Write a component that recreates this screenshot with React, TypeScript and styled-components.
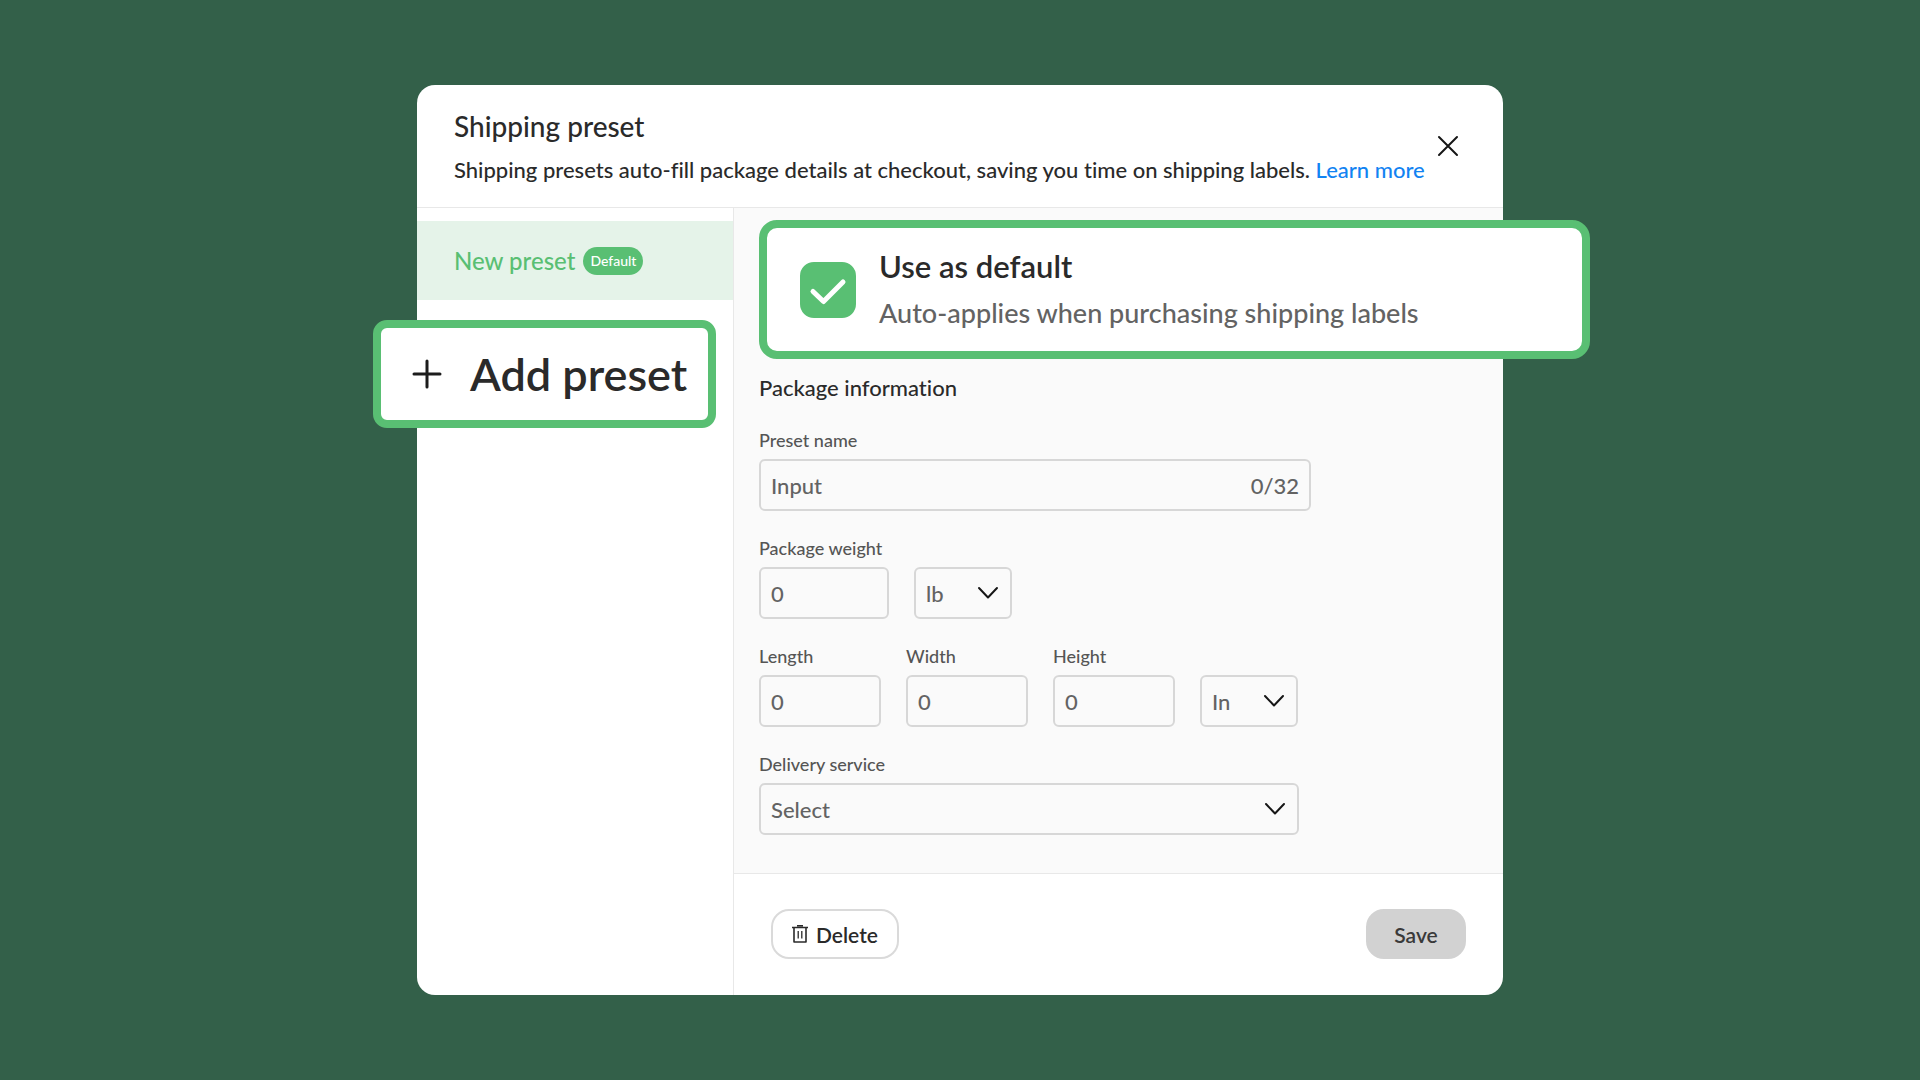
import React, { useState } from "react";
import styled, { createGlobalStyle } from "styled-components";

const green = "#59bf73";
const ink = "#2a2a2a";
const muted = "#636363";
const line = "#e8e8e8";
const outline = "#d7d7d7";

const GlobalStyle = createGlobalStyle`
  *, *::before, *::after { box-sizing: border-box; }
  body {
    margin: 0;
    background: #336049;
    color: ${ink};
    font-family: Lato, "Open Sans", sans-serif;
    font-weight: 500;
    font-variant-ligatures: none;
  }
  input, select, button { font: inherit; color: inherit; margin: 0; }
  h1, h2, p { margin: 0; font-weight: inherit; }
`;

const Page = styled.main`
  min-height: 100vh;
  display: flex;
  align-items: center;
  justify-content: center;
  padding: 40px 88px;
`;

const Dialog = styled.section`
  width: 100%;
  max-width: 1086px;
  background: #fff;
  border-radius: 18px;
`;

const Header = styled.header`
  display: flex;
  align-items: center;
  justify-content: space-between;
  padding: 23px 37px;
  border-bottom: 1px solid ${line};
`;

const Heading = styled.div`
  display: grid;
  gap: 12px;
`;

const Title = styled.h1`
  font-size: 28px;
  line-height: 36px;
`;

const Lead = styled.p`
  font-size: 22px;
  line-height: 28px;
`;

const Link = styled.a`
  color: #1283f2;
  text-decoration: none;
`;

const IconButton = styled.button`
  display: grid;
  place-items: center;
  flex: none;
  width: 36px;
  height: 36px;
  padding: 0;
  border: 0;
  background: none;
  cursor: pointer;
`;

const Body = styled.div`
  display: flex;
`;

const Sidebar = styled.nav`
  flex: 0 0 317px;
  display: flex;
  flex-direction: column;
  align-items: flex-start;
  gap: 20px;
  padding-top: 13px;
  border-right: 1px solid ${line};
`;

const PresetItem = styled.button`
  display: flex;
  align-items: center;
  gap: 8px;
  width: 100%;
  height: 79px;
  padding: 0 37px;
  border: 0;
  background: #e5f3e9;
  color: ${green};
  font-size: 24px;
  text-align: left;
  cursor: pointer;
`;

const Badge = styled.span`
  padding: 0 7px;
  border-radius: 14px;
  background: ${green};
  color: #fff;
  font-size: 14px;
  line-height: 28px;
`;

const AddPreset = styled.button`
  display: flex;
  align-items: center;
  gap: 28px;
  width: 343px;
  height: 108px;
  margin-left: -44px;
  padding: 0 0 0 31px;
  border: 8px solid ${green};
  border-radius: 14px;
  background: #fff;
  font-size: 45px;
  font-weight: 600;
  white-space: nowrap;
  cursor: pointer;
`;

const Main = styled.div`
  flex: 1;
  min-width: 0;
`;

const Form = styled.form`
  padding: 12px 25px 38px;
  background: #fafafa;
`;

const DefaultCard = styled.label`
  display: flex;
  align-items: center;
  gap: 23px;
  height: 139px;
  margin-right: -112px;
  padding: 0 33px;
  border: 8px solid ${green};
  border-radius: 18px;
  background: #fff;
`;

const CheckStack = styled.span`
  display: grid;
  > * { grid-area: 1 / 1; }
  > svg { pointer-events: none; }
`;

const Checkbox = styled.input`
  appearance: none;
  width: 56px;
  height: 56px;
  border: 2px solid ${green};
  border-radius: 14px;
  background: #fff;
  &:checked { background: ${green}; }
`;

const DefaultText = styled.span`
  display: grid;
  gap: 11px;
`;

const DefaultTitle = styled.span`
  font-size: 31px;
  line-height: 36px;
  font-weight: 600;
`;

const DefaultHint = styled.span`
  color: ${muted};
  font-size: 27px;
  line-height: 36px;
`;

const SectionTitle = styled.h2`
  margin: 17px 0 30px;
  font-size: 22px;
  line-height: 24px;
`;

const Fields = styled.div`
  display: grid;
  gap: 27px;
`;

const Row = styled.div`
  display: flex;
  align-items: flex-end;
  gap: 25px;
`;

const Field = styled.div<{ $width: number }>`
  flex: 0 1 ${(p) => p.$width}px;
  min-width: 0;
  display: grid;
  gap: 9px;
`;

const Label = styled.label`
  color: #555;
  font-size: 18px;
  line-height: 20px;
`;

const Box = styled.div`
  display: grid;
  grid-template-columns: minmax(0, 1fr) auto;
  align-items: center;
  height: 52px;
  border: 2px solid ${outline};
  border-radius: 6px;
  color: ${muted};
  font-size: 22px;
`;

const Input = styled.input`
  width: 100%;
  height: 48px;
  padding: 0 10px;
  border: 0;
  outline: 0;
  background: none;
  &::placeholder { color: inherit; opacity: 1; }
`;

const Counter = styled.span`
  padding-right: 10px;
`;

const Select = styled.select`
  grid-area: 1 / 1 / 2 / 3;
  appearance: none;
  width: 100%;
  height: 48px;
  padding: 0 10px;
  border: 0;
  outline: 0;
  background: none;
`;

const Chevron = styled.svg`
  grid-area: 1 / 2;
  margin-right: 11px;
  pointer-events: none;
`;

const Footer = styled.footer`
  display: flex;
  justify-content: space-between;
  padding: 35px 37px 36px;
  border-top: 1px solid ${line};
`;

const Button = styled.button<{ $filled?: boolean }>`
  display: flex;
  align-items: center;
  justify-content: center;
  gap: 8px;
  height: 50px;
  min-width: 100px;
  padding: 0 19px;
  border: 2px solid ${(p) => (p.$filled ? "#d2d2d2" : "#dadada")};
  border-radius: 18px;
  background: ${(p) => (p.$filled ? "#d2d2d2" : "#fff")};
  color: ${(p) => (p.$filled ? "#3a3a3a" : ink)};
  font-size: 21px;
  font-weight: 600;
  cursor: pointer;
`;

function Choice({ id, label, options }: { id: string; label?: string; options: string[] }) {
  return (
    <Box>
      <Select id={id} aria-label={label}>
        {options.map((o) => (
          <option key={o}>{o}</option>
        ))}
      </Select>
      <Chevron width="22" height="14" viewBox="0 0 22 14" fill="none" stroke="#161616" strokeWidth="2" strokeLinecap="round" strokeLinejoin="round">
        <path d="M2 2l9 9.500l9-9.500" />
      </Chevron>
    </Box>
  );
}

function NumberField({ id, label, width }: { id: string; label: string; width: number }) {
  return (
    <Field $width={width}>
      <Label htmlFor={id}>{label}</Label>
      <Box>
        <Input id={id} placeholder="0" inputMode="decimal" />
      </Box>
    </Field>
  );
}

export default function App() {
  const [name, setName] = useState("");
  const [isDefault, setIsDefault] = useState(true);

  return (
    <>
      <GlobalStyle />
      <Page>
        <Dialog role="dialog" aria-labelledby="dialog-title">
          <Header>
            <Heading>
              <Title id="dialog-title">Shipping preset</Title>
              <Lead>
                Shipping presets auto-fill package details at checkout, saving you time on shipping labels.{" "}
                <Link href="#learn">Learn more</Link>
              </Lead>
            </Heading>
            <IconButton type="button" aria-label="Close">
              <svg width="22" height="22" viewBox="0 0 22 22" fill="none" stroke="#161616" strokeWidth="2" strokeLinecap="round">
                <path d="M2 2l18 18M20 2L2 20" />
              </svg>
            </IconButton>
          </Header>
          <Body>
            <Sidebar>
              <PresetItem type="button">
                New preset <Badge>Default</Badge>
              </PresetItem>
              <AddPreset type="button">
                <svg width="30" height="30" viewBox="0 0 30 30" fill="none" stroke="#1c1c1c" strokeWidth="3" strokeLinecap="round">
                  <path d="M15 2v26M2 15h26" />
                </svg>
                Add preset
              </AddPreset>
            </Sidebar>
            <Main>
              <Form id="preset-form">
                <DefaultCard>
                  <CheckStack>
                    <Checkbox type="checkbox" checked={isDefault} onChange={(e) => setIsDefault(e.target.checked)} />
                    <svg width="56" height="56" viewBox="0 0 56 56" fill="none" stroke="#fff" strokeWidth="5" strokeLinecap="round" strokeLinejoin="round">
                      <path d="M13 29.500L23.500 39.500L43 20" />
                    </svg>
                  </CheckStack>
                  <DefaultText>
                    <DefaultTitle>Use as default</DefaultTitle>
                    <DefaultHint>Auto-applies when purchasing shipping labels</DefaultHint>
                  </DefaultText>
                </DefaultCard>
                <SectionTitle>Package information</SectionTitle>
                <Fields>
                  <Row>
                    <Field $width={552}>
                      <Label htmlFor="name">Preset name</Label>
                      <Box>
                        <Input id="name" placeholder="Input" maxLength={32} value={name} onChange={(e) => setName(e.target.value)} />
                        <Counter>{name.length}/32</Counter>
                      </Box>
                    </Field>
                  </Row>
                  <Row>
                    <NumberField id="weight" label="Package weight" width={130} />
                    <Field $width={98}>
                      <Choice id="weight-unit" label="Weight unit" options={["lb", "oz", "kg"]} />
                    </Field>
                  </Row>
                  <Row>
                    <NumberField id="length" label="Length" width={122} />
                    <NumberField id="width" label="Width" width={122} />
                    <NumberField id="height" label="Height" width={122} />
                    <Field $width={98}>
                      <Choice id="size-unit" label="Size unit" options={["In", "cm"]} />
                    </Field>
                  </Row>
                  <Row>
                    <Field $width={540}>
                      <Label htmlFor="service">Delivery service</Label>
                      <Choice id="service" options={["Select"]} />
                    </Field>
                  </Row>
                </Fields>
              </Form>
              <Footer>
                <Button type="button">
                  <svg width="16" height="18" viewBox="0 0 16 18" fill="none" stroke={ink} strokeWidth="1.600" strokeLinejoin="round">
                    <path d="M0 2.500h16M2 2.500v14.500h12V2.500M5 0.800h6" />
                    <path d="M6.200 6v7.500M9.800 6v7.500" strokeWidth="1.300" />
                  </svg>
                  Delete
                </Button>
                <Button type="submit" form="preset-form" $filled>
                  Save
                </Button>
              </Footer>
            </Main>
          </Body>
        </Dialog>
      </Page>
    </>
  );
}
